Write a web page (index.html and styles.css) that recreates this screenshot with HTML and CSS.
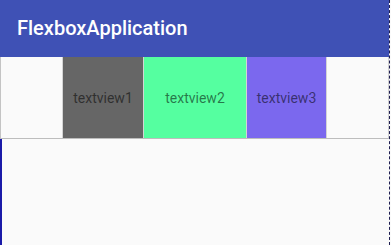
FILE: index.html
```html
<!DOCTYPE html>
<html lang="en">
<head>
    <meta charset="UTF-8">
    <meta name="viewport" content="width=device-width, initial-scale=1.0">
    <title>FlexboxApplication</title>
    <link rel="stylesheet" href="styles.css">
</head>
<body>
    <div class="screen">
        <header class="app-bar">
            <h1>FlexboxApplication</h1>
        </header>
        <div class="flex-row">
            <div class="item item-1">textview1</div>
            <div class="item item-2">textview2</div>
            <div class="item item-3">textview3</div>
        </div>
        <div class="content"></div>
    </div>
</body>
</html>
```

FILE: styles.css
```css
* {
    margin: 0;
    padding: 0;
    box-sizing: border-box;
}

body {
    font-family: Roboto, 'Noto Sans', sans-serif;
    background-color: #fafafa;
    width: 391px;
    height: 245px;
    overflow: hidden;
}

.screen {
    display: flex;
    flex-direction: column;
    width: 390px;
    height: 245px;
    border-right: 1px dashed #1e1e50;
}

.app-bar {
    background-color: #3f51b5;
    height: 57px;
    display: flex;
    align-items: center;
    padding-left: 17px;
}

.app-bar h1 {
    color: #ffffff;
    font-size: 20px;
    font-weight: 500;
    margin-top: -2px;
}

.flex-row {
    display: flex;
    justify-content: center;
    height: 82px;
    border-left: 1px solid #c4c4c4;
    border-right: 1px solid #d0d0d0;
    border-bottom: 1px solid #bdbdbd;
}

.item {
    display: flex;
    align-items: center;
    justify-content: center;
    font-size: 14px;
    color: rgba(0, 0, 0, 0.55);
    border: 1px solid #d4d4d4;
    border-top: none;
    border-bottom: none;
}

.item-1 {
    width: 82px;
    background-color: #666666;
}

.item-2 {
    width: 102px;
    background-color: #55ffa0;
    border-left: none;
    border-right: none;
}

.item-3 {
    width: 81px;
    background-color: #7b68ee;
}

.content {
    flex: 1;
    border-left: 2px solid #1a1aa8;
}
```
